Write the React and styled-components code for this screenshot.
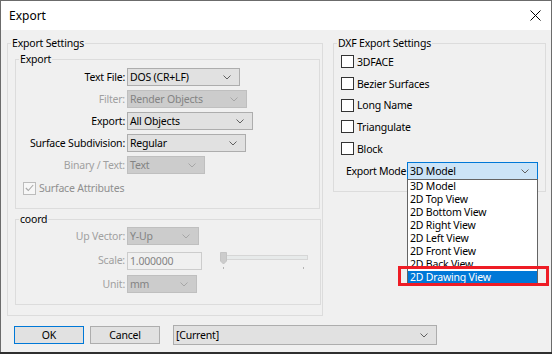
import React from 'react';
import styled, { createGlobalStyle } from 'styled-components';

const GlobalStyle = createGlobalStyle`
  html, body { margin: 0; padding: 0; }
  body {
    width: 552px;
    height: 354px;
    overflow: hidden;
    background: #2f2f2f;
    font-family: "Noto Sans", "DejaVu Sans", sans-serif;
    font-size: 10.5px;
    letter-spacing: -0.2px;
    color: #000;
  }
`;

const Window = styled.div`
  width: 552px;
  height: 352px;
  box-sizing: border-box;
  border: 1px solid #6b6b6b;
  border-bottom: none;
  background: #f0f0f0;
  display: flex;
  flex-direction: column;
`;

const TitleBar = styled.div`
  height: 29px;
  background: #fff;
  display: flex;
  align-items: center;
  justify-content: space-between;
  padding: 0 10px 0 8px;
`;

const Title = styled.span`
  font-size: 12px;
  letter-spacing: 0;
`;

const Body = styled.div`
  display: flex;
  flex-direction: column;
  padding-top: 5px;
`;

const MainRow = styled.div`
  display: flex;
  align-items: flex-start;
  gap: 10px;
  padding-left: 6px;
`;

const Group = styled.fieldset`
  margin: 0;
  padding: 0;
  min-width: 0;
  width: ${p => p.$width}px;
  box-sizing: border-box;
  border: 1px solid #dcdcdc;
`;

const Legend = styled.legend`
  padding: 0 1px;
  margin-left: 3px;
  line-height: 16px;
`;

const GroupColumn = styled.div`
  display: flex;
  flex-direction: column;
  gap: 2px;
  padding: 0 2px 10px 7px;
`;

const FormGrid = styled.div`
  display: grid;
  grid-template-columns: 109px auto;
  column-gap: 2px;
  row-gap: 4px;
  align-items: center;
  padding: ${p => p.$pad};
`;

const Label = styled.span`
  text-align: right;
  white-space: nowrap;
  color: ${p => (p.$disabled ? '#a0a0a0' : '#000')};
`;

const Field = styled.div`
  display: flex;
  align-items: center;
  gap: 18px;
  margin-top: ${p => p.$mt || 0}px;
`;

const ComboBox = styled.div`
  position: relative;
  flex-shrink: 0;
  width: ${p => p.$width}px;
  height: ${p => p.$height || 18}px;
  box-sizing: border-box;
  display: flex;
  align-items: center;
  justify-content: space-between;
  padding: 0 8px 0 2px;
  white-space: nowrap;
  border: 1px solid ${p => (p.$active ? '#0078d7' : p.$disabled ? '#bfbfbf' : '#adadad')};
  background: ${p => (p.$active ? '#cce4f7' : p.$disabled ? '#cccccc' : '#e1e1e1')};
  color: ${p => (p.$disabled ? '#838383' : '#000')};
`;

const TextBox = styled.div`
  width: 75px;
  height: 18px;
  box-sizing: border-box;
  border: 1px solid #cccccc;
  background: #f0f0f0;
  color: #838383;
  padding-left: 2px;
  display: flex;
  align-items: center;
`;

const CheckRow = styled.label`
  display: flex;
  align-items: center;
  gap: 3px;
  height: ${p => p.$height}px;
  color: ${p => (p.$disabled ? '#8f8f8f' : '#000')};
  grid-column: 1 / -1;
`;

const Box = styled.span`
  width: 13px;
  height: 13px;
  box-sizing: border-box;
  border: 1px solid ${p => (p.$disabled ? '#bcbcbc' : '#333')};
  background: ${p => (p.$disabled ? '#f7f7f7' : '#fff')};
  display: flex;
  align-items: center;
  justify-content: center;
`;

const SurfaceCheck = styled(CheckRow)`
  padding-left: 7px;
`;

const DxfContent = styled.div`
  display: flex;
  flex-direction: column;
  padding: 0 7px 11px 7px;
`;

const ModeRow = styled.div`
  display: flex;
  align-items: center;
  gap: 1px;
  margin-top: 3px;
  padding-left: 5px;
  white-space: nowrap;
`;

const ModeLabel = styled.span`
  letter-spacing: -0.3px;
`;

const DropList = styled.ul`
  position: absolute;
  top: 100%;
  left: -1px;
  width: 131px;
  margin: 0;
  padding: 0;
  list-style: none;
  box-sizing: border-box;
  border: 1px solid #646464;
  background: #fff;
  z-index: 2;
`;

const DropItem = styled.li`
  height: 13px;
  line-height: 13px;
  padding-left: 2px;
  white-space: nowrap;
  background: ${p => (p.$selected ? '#0078d7' : 'transparent')};
  color: ${p => (p.$selected ? '#fff' : '#000')};
`;

const Highlight = styled.div`
  position: absolute;
  left: -10px;
  top: 86px;
  width: 151px;
  height: 20px;
  box-sizing: border-box;
  border: 3px solid #ee1c25;
  pointer-events: none;
`;

const ButtonRow = styled.div`
  display: flex;
  align-items: center;
  height: 20px;
  margin-top: 9px;
  padding-left: 13px;
`;

const Button = styled.button`
  width: 70px;
  height: 18px;
  box-sizing: border-box;
  margin: 0 ${p => p.$gap}px 0 0;
  padding: 0;
  font: inherit;
  letter-spacing: inherit;
  background: #e1e1e1;
  border: 1px solid ${p => (p.$default ? '#0078d7' : '#adadad')};
`;

const Chevron = ({ color = '#606060' }) => (
  <svg width="8" height="5" viewBox="0 0 8 5">
    <path d="M0.5 0.5 L4 4 L7.5 0.5" fill="none" stroke={color} strokeWidth="1" />
  </svg>
);

const Combo = ({ value, width, disabled, active, height, children }) => (
  <ComboBox $width={width} $disabled={disabled} $active={active} $height={height}>
    <span>{value}</span>
    <Chevron color={disabled ? '#a6a6a6' : '#606060'} />
    {children}
  </ComboBox>
);

const CheckMark = () => (
  <svg width="9" height="8" viewBox="0 0 9 8">
    <path d="M0.8 4 L3.3 6.5 L8.2 1" fill="none" stroke="#a8a8a8" strokeWidth="1.1" />
  </svg>
);

const Slider = () => (
  <svg width="90" height="20" viewBox="0 0 90 20">
    <rect x="0.5" y="4.5" width="87" height="4" fill="#e7eaea" stroke="#d6d6d6" />
    <path d="M0.5 1.5 H6.5 V10 L3.5 13 L0.5 10 Z" fill="#cccccc" stroke="#c4c4c4" />
    <line x1="3.5" y1="16" x2="3.5" y2="18" stroke="#b4b4b4" />
    <line x1="83.5" y1="16" x2="83.5" y2="18" stroke="#b4b4b4" />
  </svg>
);

const modes = [
  '3D Model', '2D Top View', '2D Bottom View', '2D Right View',
  '2D Left View', '2D Front View', '2D Back View', '2D Drawing View',
];

const App = () => (
  <>
    <GlobalStyle />
    <Window>
      <TitleBar>
        <Title>Export</Title>
        <svg width="11" height="11" viewBox="0 0 11 11">
          <path d="M0.5 0.5 L10.5 10.5 M10.5 0.5 L0.5 10.5" stroke="#000" strokeWidth="1" />
        </svg>
      </TitleBar>
      <Body>
        <MainRow>
          <Group $width={316}>
            <Legend>Export Settings</Legend>
            <GroupColumn>
              <Group $width={305}>
                <Legend>Export</Legend>
                <FormGrid $pad="1px 0 10px 0">
                  <Label>Text File:</Label>
                  <Field><Combo value="DOS (CR+LF)" width={113} /></Field>
                  <Label $disabled>Filter:</Label>
                  <Field><Combo value="Render Objects" width={120} disabled /></Field>
                  <Label>Export:</Label>
                  <Field><Combo value="All Objects" width={126} /></Field>
                  <Label>Surface Subdivision:</Label>
                  <Field><Combo value="Regular" width={119} /></Field>
                  <Label $disabled>Binary / Text:</Label>
                  <Field><Combo value="Text" width={78} disabled /></Field>
                  <SurfaceCheck $height={20} $disabled>
                    <Box $disabled><CheckMark /></Box>
                    Surface Attributes
                  </SurfaceCheck>
                </FormGrid>
              </Group>
              <Group $width={306}>
                <Legend>coord</Legend>
                <FormGrid $pad="0 0 11px 0">
                  <Label $disabled>Up Vector:</Label>
                  <Field><Combo value="Y-Up" width={72} disabled /></Field>
                  <Label $disabled>Scale:</Label>
                  <Field $mt={2}>
                    <TextBox>1.000000</TextBox>
                    <Slider />
                  </Field>
                  <Label $disabled>Unit:</Label>
                  <Field><Combo value="mm" width={70} disabled /></Field>
                </FormGrid>
              </Group>
            </GroupColumn>
          </Group>
          <Group $width={213}>
            <Legend>DXF Export Settings</Legend>
            <DxfContent>
              {['3DFACE', 'Bezier Surfaces', 'Long Name', 'Triangulate', 'Block'].map(name => (
                <CheckRow key={name} $height={21.7}>
                  <Box />
                  {name}
                </CheckRow>
              ))}
              <ModeRow>
                <ModeLabel>Export Mode</ModeLabel>
                <Combo value="3D Model" width={131} active>
                  <DropList>
                    {modes.map((m, i) => (
                      <DropItem key={m} $selected={i === modes.length - 1}>{m}</DropItem>
                    ))}
                    <Highlight />
                  </DropList>
                </Combo>
              </ModeRow>
            </DxfContent>
          </Group>
        </MainRow>
        <ButtonRow>
          <Button $default $gap={6}>OK</Button>
          <Button $gap={13}>Cancel</Button>
          <Combo value="[Current]" width={264} height={20} />
        </ButtonRow>
      </Body>
    </Window>
  </>
);

export default App;
